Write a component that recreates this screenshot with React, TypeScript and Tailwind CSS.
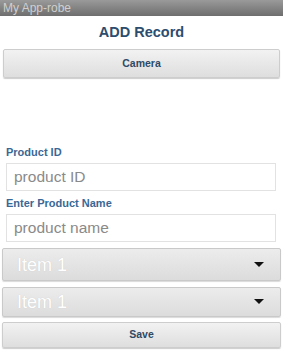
import { useState } from "react";

function Caret() {
  return (
    <svg width="10" height="6" viewBox="0 0 10 6" className="shrink-0">
      <path d="M0 0 L10 0 L5 5 Z" fill="#111" />
    </svg>
  );
}

function Picker({ value, tall }: { value: string; tall?: boolean }) {
  return (
    <div
      className={`flex items-center justify-between rounded-[2px] border border-[#c9c9c9] bg-gradient-to-b from-[#ececec] to-[#dcdcdc] pl-[14px] pr-[16px] shadow-[0_1px_1px_rgba(0,0,0,0.15)] ${
        tall ? "h-[33px]" : "h-[30px]"
      }`}
    >
      <span className="text-[18px] leading-none text-white [text-shadow:0_0_1px_rgba(0,0,0,0.15)]">
        {value}
      </span>
      <Caret />
    </div>
  );
}

export default function App() {
  const [id, setId] = useState("");
  const [name, setName] = useState("");

  return (
    <div className="h-[355px] w-[283px] overflow-hidden bg-white font-['Liberation_Sans',Arial,sans-serif]">
      {/* status / title bar */}
      <div className="flex h-[16px] items-center bg-gradient-to-b from-[#9a9a9a] to-[#6e6e6e] pl-[3px]">
        <span className="text-[12px] leading-none text-[#cfcfcf]">My App-robe</span>
      </div>

      <h1 className="pt-[9px] pb-[9px] text-center text-[14.5px] font-bold leading-[15px] text-[#2d4d6e]">
        ADD Record
      </h1>

      <div className="px-[3px]">
        <button className="flex h-[29px] w-full items-center justify-center rounded-[2px] border border-[#cdcdcd] bg-gradient-to-b from-[#f2f2f2] to-[#dedede] text-[10.5px] font-bold text-[#2f4a66] shadow-[0_1px_1px_rgba(0,0,0,0.2)]">
          Camera
        </button>
      </div>

      <div className="px-[6px] pt-[68px]">
        <label className="block text-[11px] font-bold leading-[13px] text-[#3a6896]">Product ID</label>
        <input
          value={id}
          onChange={(e) => setId(e.target.value)}
          placeholder="product ID"
          className="mt-[4px] h-[28px] w-[270px] border border-[#e2e2e2] px-[7px] text-[15.5px] text-[#555] outline-none placeholder:text-[#8a8a8a]"
        />
        <label className="mt-[6px] block text-[11px] font-bold leading-[13px] text-[#3a6896]">
          Enter Product Name
        </label>
        <input
          value={name}
          onChange={(e) => setName(e.target.value)}
          placeholder="product name"
          className="mt-[4px] h-[28px] w-[270px] border border-[#e2e2e2] px-[7px] text-[15.5px] text-[#555] outline-none placeholder:text-[#8a8a8a]"
        />
      </div>

      <div className="flex flex-col gap-[6px] px-[2px] pt-[6px]">
        <Picker value="Item 1" tall />
        <Picker value="Item 1" />
        <button className="mt-[-1px] flex h-[26px] w-full items-center justify-center rounded-[2px] border border-[#cdcdcd] bg-gradient-to-b from-[#f2f2f2] to-[#dedede] text-[10.5px] font-bold text-[#2f4a66] shadow-[0_1px_1px_rgba(0,0,0,0.2)]">
          Save
        </button>
      </div>
    </div>
  );
}
